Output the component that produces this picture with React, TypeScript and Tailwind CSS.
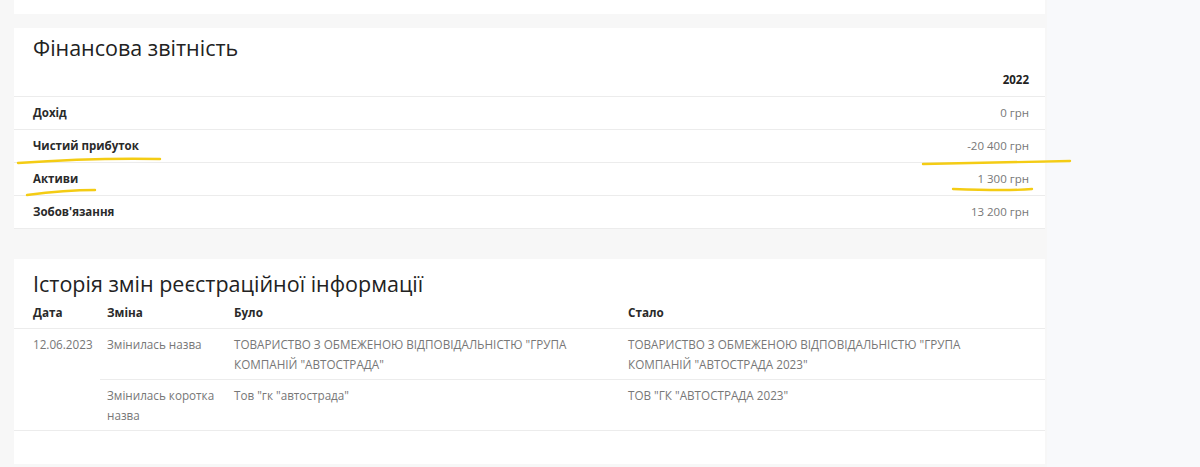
import React from "react";

const finance = [
  { label: "Дохід", value: "0 грн" },
  { label: "Чистий прибуток", value: "-20 400 грн" },
  { label: "Активи", value: "1 300 грн" },
  { label: "Зобов'язання", value: "13 200 грн" },
];

const Marks = () => (
  <svg
    className="absolute left-0 top-0 pointer-events-none"
    width="1200"
    height="467"
    viewBox="0 0 1200 467"
    fill="none"
  >
    <g stroke="#f4cc14" strokeWidth="2.4" strokeLinecap="round">
      <path d="M18 163 C 60 160, 110 158, 160 159" />
      <path d="M27 195 C 50 192, 75 190, 95 190" />
      <path d="M923 164 C 980 163, 1030 162, 1070 161" />
      <path d="M953 189 C 980 190, 1010 191, 1032 189" />
    </g>
  </svg>
);

export default function App() {
  return (
    <div
      className="relative flex w-[1200px] h-[467px] overflow-hidden bg-[#f8f9fb] text-[#333]"
      style={{ fontFamily: '"Open Sans", "Noto Sans", sans-serif' }}
    >
      {/* main column */}
      <div className="w-[1047px] bg-[#f7f7f7] pl-[14px] pr-[2px]">
        <div className="h-[14px] bg-white" />

        {/* FINANCE */}
        <div className="mt-[14px] bg-white">
          <h2 className="pl-[19px] pt-[5px] text-[21.5px] leading-[29px] font-normal text-[#222]">
            Фінансова звітність
          </h2>
          <div className="flex justify-end pr-[16px] pt-[10px] pb-[8px] border-b border-[#ececec]">
            <span className="text-[11.5px] leading-[16px] font-bold text-[#222]">2022</span>
          </div>
          {finance.map((row) => (
            <div
              key={row.label}
              className="flex items-center justify-between pl-[19px] pr-[16px] py-[8px] border-b border-[#ececec]"
            >
              <span className="text-[11.5px] leading-[16px] font-bold text-[#2a2a2a]">{row.label}</span>
              <span className="text-[11.5px] leading-[16px] text-[#777]">{row.value}</span>
            </div>
          ))}
        </div>

        {/* HISTORY */}
        <div className="mt-[30px] bg-white pb-[33px]">
          <h2 className="pl-[19px] pt-[10px] text-[21.5px] leading-[29px] font-normal text-[#222]">
            Історія змін реєстраційної інформації
          </h2>
          <table className="w-full table-fixed border-collapse text-[11.7px]">
            <colgroup>
              <col className="w-[86px]" />
              <col className="w-[127px]" />
              <col className="w-[394px]" />
              <col />
            </colgroup>
            <thead>
              <tr className="border-b border-[#ececec] text-left">
                <th className="pl-[19px] pt-[6px] pb-[8px] leading-[16px] font-bold text-[#2a2a2a]">Дата</th>
                <th className="pl-[7px] pt-[6px] pb-[8px] leading-[16px] font-bold text-[#2a2a2a]">Зміна</th>
                <th className="pl-[7px] pt-[6px] pb-[8px] leading-[16px] font-bold text-[#2a2a2a]">Було</th>
                <th className="pl-[7px] pt-[6px] pb-[8px] leading-[16px] font-bold text-[#2a2a2a]">Стало</th>
              </tr>
            </thead>
            <tbody className="text-[#777] leading-[20px] align-top">
              <tr className="border-b border-[#ececec]">
                <td rowSpan={2} className="pl-[19px] py-[5px] border-b border-[#ececec]">
                  12.06.2023
                </td>
                <td className="px-[7px] py-[5px]">Змінилась назва</td>
                <td className="px-[7px] py-[5px]">
                  ТОВАРИСТВО З ОБМЕЖЕНОЮ ВІДПОВІДАЛЬНІСТЮ "ГРУПА КОМПАНІЙ "АВТОСТРАДА"
                </td>
                <td className="px-[7px] pr-[60px] py-[5px]">
                  ТОВАРИСТВО З ОБМЕЖЕНОЮ ВІДПОВІДАЛЬНІСТЮ "ГРУПА КОМПАНІЙ "АВТОСТРАДА 2023"
                </td>
              </tr>
              <tr className="border-b border-[#ececec]">
                <td className="px-[7px] py-[5px]">Змінилась коротка назва</td>
                <td className="px-[7px] py-[5px]">Тов "гк "автострада"</td>
                <td className="px-[7px] py-[5px]">ТОВ "ГК "АВТОСТРАДА 2023"</td>
              </tr>
            </tbody>
          </table>
        </div>
      </div>

      <Marks />
    </div>
  );
}
